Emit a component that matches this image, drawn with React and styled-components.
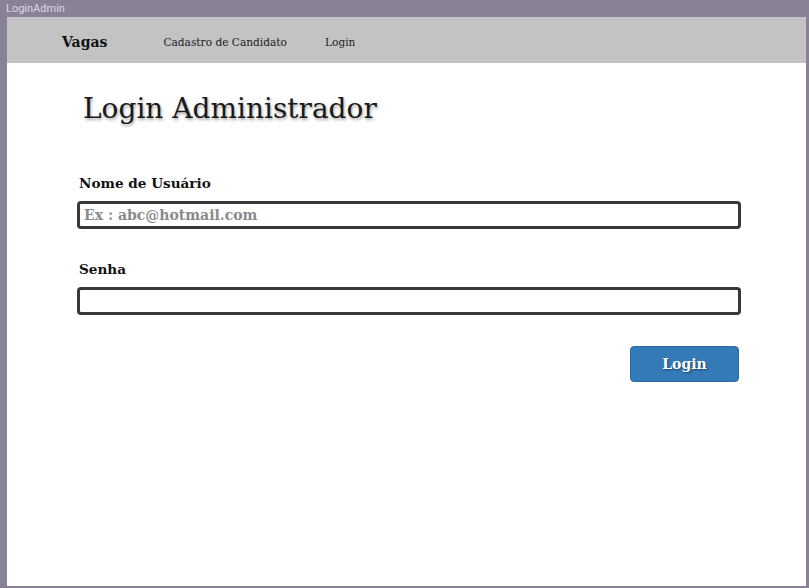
import React from 'react';
import styled, { createGlobalStyle } from 'styled-components';

const GlobalStyle = createGlobalStyle`
  html, body {
    margin: 0;
    padding: 0;
    background: #8a8197;
  }
  * {
    box-sizing: border-box;
  }
`;

const Frame = styled.div`
  width: 809px;
  height: 588px;
  background: #8a8197;
  display: flex;
  flex-direction: column;
  padding: 0 3px 2px 7px;
`;

const TitleBar = styled.div`
  height: 17px;
  flex-shrink: 0;
  margin-left: -1px;
  font-family: Roboto, 'Liberation Sans', sans-serif;
  font-size: 11px;
  line-height: 17px;
  color: #dcd8e2;
`;

const Window = styled.div`
  flex: 1;
  background: #ffffff;
  display: flex;
  flex-direction: column;
  font-family: 'DejaVu Serif', 'Liberation Serif', serif;
  color: #111;
`;

const NavBar = styled.nav`
  height: 46px;
  background: #c3c3c3;
  display: flex;
  align-items: center;
  padding: 4px 0 0 55px;
`;

const Brand = styled.span`
  font-weight: bold;
  font-size: 14px;
  margin-right: 56px;
`;

const NavLink = styled.a`
  font-size: 10.6px;
  color: #222;
  text-decoration: none;
  margin-right: ${(p) => p.$gap || 0}px;
`;

const Content = styled.main`
  padding: 26px 65px 0 70px;
  display: flex;
  flex-direction: column;
`;

const Heading = styled.h1`
  margin: 0 0 44px 6px;
  font-weight: normal;
  font-size: 28px;
  line-height: 40px;
  color: #1a1a1a;
  text-shadow: 1px 2px 3px rgba(0, 0, 0, 0.35);
`;

const Field = styled.div`
  display: flex;
  flex-direction: column;
  margin-bottom: ${(p) => p.$mb || 0}px;
`;

const Label = styled.label`
  font-weight: bold;
  font-size: 13.6px;
  line-height: 20px;
  margin: 0 0 8px 2px;
`;

const Input = styled.input`
  height: 28px;
  border: 3px solid #383838;
  border-radius: 4px;
  padding: 0 4px;
  font-family: 'DejaVu Serif', 'Liberation Serif', serif;
  font-size: 14px;
  font-weight: bold;
  color: #333;
  outline: none;

  &::placeholder {
    color: #8a8a8a;
  }
`;

const Actions = styled.div`
  display: flex;
  justify-content: flex-end;
  padding-right: 2px;
`;

const Button = styled.button`
  width: 109px;
  height: 36px;
  background: #337ab7;
  border: 1px solid #2e6da4;
  border-radius: 4px;
  color: #fff;
  font-family: 'DejaVu Serif', 'Liberation Serif', serif;
  font-weight: bold;
  font-size: 14px;
  text-shadow: 1px 1px 2px rgba(0, 0, 0, 0.45);
  cursor: pointer;
`;

export default function App() {
  return (
    <>
      <GlobalStyle />
      <Frame>
        <TitleBar>LoginAdmin</TitleBar>
        <Window>
          <NavBar>
            <Brand>Vagas</Brand>
            <NavLink href="#" $gap={38}>Cadastro de Candidato</NavLink>
            <NavLink href="#">Login</NavLink>
          </NavBar>
          <Content>
            <Heading>Login Administrador</Heading>
            <Field $mb={30}>
              <Label>Nome de Usuário</Label>
              <Input placeholder="Ex : abc@hotmail.com" />
            </Field>
            <Field $mb={31}>
              <Label>Senha</Label>
              <Input type="password" />
            </Field>
            <Actions>
              <Button>Login</Button>
            </Actions>
          </Content>
        </Window>
      </Frame>
    </>
  );
}
